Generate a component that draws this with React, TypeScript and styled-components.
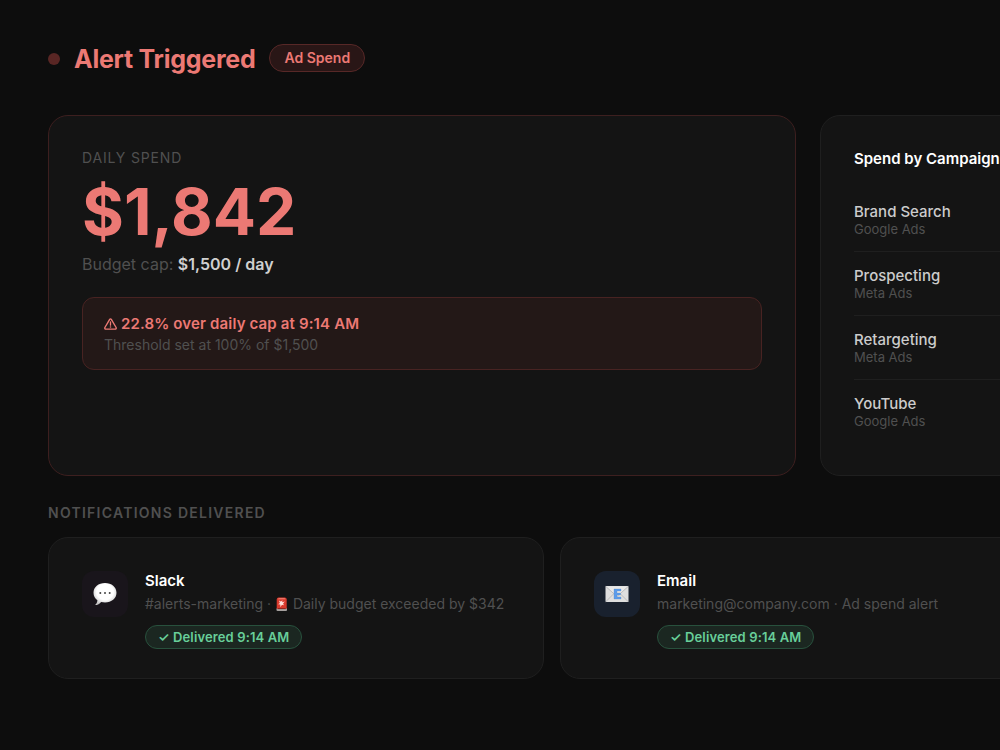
import React from "react";
import styled, { createGlobalStyle } from "styled-components";

const GlobalStyle = createGlobalStyle`
  *, *::before, *::after { box-sizing: border-box; }
  body {
    margin: 0;
    background: #0d0d0d;
    color: #fff;
    font-family: Inter, "Liberation Sans", sans-serif;
    overflow: hidden;
    -webkit-font-smoothing: antialiased;
  }
  h1, h2, h3, p, ul { margin: 0; padding: 0; }
`;

const Page = styled.main`
  min-width: 1616px;
  min-height: 100vh;
  padding: 43px 48px;
`;

const Header = styled.header`
  display: flex;
  align-items: center;
  gap: 14px;
  margin-bottom: 40px;
`;

const StatusDot = styled.span`
  width: 12px;
  height: 12px;
  border-radius: 50%;
  background: #592624;
`;

const Title = styled.h1`
  font-size: 25px;
  line-height: 32px;
  font-weight: 700;
  letter-spacing: -0.01em;
  color: #ec7974;
`;

const Tag = styled.span`
  margin-bottom: 2px;
  padding: 4px 14px;
  border: 1px solid #572827;
  border-radius: 20px;
  background: #291616;
  color: #ec7974;
  font-size: 14px;
  line-height: 18px;
  font-weight: 600;
`;

const Overview = styled.div`
  display: grid;
  grid-template-columns: 1fr 1fr;
  gap: 24px;
  margin-bottom: 28px;
`;

const Card = styled.section<{ $alert?: boolean }>`
  padding: 33px;
  border: 1px solid ${(p) => (p.$alert ? "#3d1f1f" : "#1f1f1f")};
  border-radius: 20px;
  background: #141414;
`;

const MetricLabel = styled.h2`
  font-size: 14px;
  line-height: 18px;
  font-weight: 400;
  letter-spacing: 0.06em;
  text-transform: uppercase;
  color: #505050;
`;

const MetricValue = styled.p`
  margin: 13px 0 9px;
  font-size: 64px;
  line-height: 64px;
  font-weight: 700;
  color: #ec7974;
`;

const MetricNote = styled.p`
  font-size: 16px;
  line-height: 22px;
  color: #505050;

  strong {
    font-weight: 600;
    color: #d0d0d0;
  }
`;

const AlertBox = styled.div`
  margin-top: 22px;
  padding: 16px 21px;
  border: 1px solid #482322;
  border-radius: 12px;
  background: #231817;
`;

const AlertTitle = styled.p`
  margin-bottom: 3px;
  font-size: 15px;
  line-height: 19px;
  font-weight: 600;
  letter-spacing: 0.01em;
  color: #ec7974;

  svg { vertical-align: -1px; }
`;

const AlertText = styled.p`
  font-size: 14px;
  line-height: 17px;
  color: #505050;
`;

const CardTitle = styled.h2`
  margin-bottom: 20px;
  font-size: 15px;
  line-height: 19px;
  font-weight: 600;
`;

const CampaignList = styled.ul`
  list-style: none;
`;

const Campaign = styled.li`
  padding: 15px 0 13px;
  border-bottom: 1px solid #1f1f1f;

  &:last-child {
    padding-bottom: 12px;
    border-bottom: 0;
  }
`;

const CampaignName = styled.p`
  font-size: 15px;
  line-height: 18px;
  font-weight: 500;
  color: #ccc;
`;

const CampaignSource = styled.p`
  font-size: 13px;
  line-height: 17px;
  color: #505050;
`;

const SectionTitle = styled.h2`
  margin-bottom: 15px;
  font-size: 14px;
  line-height: 18px;
  font-weight: 600;
  letter-spacing: 0.09em;
  text-transform: uppercase;
  color: #505050;
`;

const Channels = styled.div`
  display: grid;
  grid-template-columns: repeat(3, 1fr);
  gap: 16px;
`;

const ChannelCard = styled(Card)`
  display: flex;
  align-items: flex-start;
  gap: 17px;
  padding-top: 32px;
  padding-bottom: 29px;
`;

const ChannelIcon = styled.div<{ $tint: string }>`
  display: grid;
  place-items: center;
  width: 46px;
  height: 46px;
  margin-top: 1px;
  border-radius: 12px;
  background: ${(p) => p.$tint};
`;

const ChannelName = styled.h3`
  font-size: 15px;
  line-height: 22px;
  font-weight: 600;
`;

const ChannelText = styled.p`
  margin: 1px 0 11px;
  font-size: 14px;
  line-height: 21px;
  color: #505050;

  svg { vertical-align: -2px; }
`;

const Delivered = styled.span`
  display: block;
  width: fit-content;
  padding: 3px 12px;
  border: 1px solid #28513d;
  border-radius: 20px;
  background: #1b2721;
  color: #68cf9a;
  font-size: 13px;
  line-height: 16px;
  font-weight: 600;
  letter-spacing: 0.01em;
`;

const WarningIcon = () => (
  <svg width="13" height="12" viewBox="0 0 13 12" fill="none" role="img" aria-label="⚠">
    <path
      d="M5.700 1.300.9 9.500c-.4.800.1 1.600.9 1.600h9.400c.8 0 1.300-.8.9-1.600L7.300 1.300c-.4-.6-1.200-.6-1.600 0Z"
      stroke="currentColor"
      strokeWidth="1.400"
      strokeLinejoin="round"
    />
    <path d="M6.500 3.900v3.300" stroke="currentColor" strokeWidth="1.300" strokeLinecap="round" />
    <circle cx="6.500" cy="9" r="0.800" fill="currentColor" />
  </svg>
);

const SpeechIcon = () => (
  <svg width="24" height="24" viewBox="0 0 24 24" aria-hidden="true">
    <defs>
      <radialGradient id="bubble" cx="50%" cy="40%" r="60%">
        <stop offset="0.6" stopColor="#fff" />
        <stop offset="1" stopColor="#c4c4c4" />
      </radialGradient>
    </defs>
    <path
      d="M12 1C5.400 1 .5 5.100.5 10.700c0 3.400 1.400 5.700 3.900 7.500-.2 2-.9 3.600-2.300 4.900 2.500-.1 4.700-1.200 6-3.200 1.200.3 2.500.5 3.900.5 6.600 0 11.500-4.100 11.500-9.700S18.600 1 12 1Z"
      fill="url(#bubble)"
    />
    <circle cx="7.300" cy="11" r="1" fill="#444" />
    <circle cx="12" cy="11" r="1" fill="#444" />
    <circle cx="16.700" cy="11" r="1" fill="#444" />
  </svg>
);

const MailIcon = () => (
  <svg width="24" height="24" viewBox="0 0 24 24" aria-hidden="true">
    <rect x="0.5" y="4" width="23" height="16" rx="0.8" fill="#dedede" />
    <path d="M.8 19.700 9.500 11M23.200 19.700 14.500 11" stroke="#b2b2b2" strokeWidth="0.800" />
    <path d="M.8 4.500 12 14.500 23.200 4.500" fill="#e8e8e8" stroke="#b2b2b2" strokeWidth="0.800" />
    <path d="M9 7h7v2h-4v2h3.500v2H12v2h4v2H9Z" fill="#5b9bea" stroke="#5588c8" strokeWidth="0.300" />
  </svg>
);

const SirenIcon = () => (
  <svg width="14" height="14" viewBox="0 0 14 14" role="img" aria-label="🚨">
    <rect x="1.500" y="11" width="10.500" height="3" rx="1" fill="#a5a09e" />
    <path d="M1.700 11.800V2.500Q1.700.4 3.700.4h6q2 0 2 2.100v9.300Z" fill="#d93a2d" />
    <path d="M3 2.200Q3.200 1.200 4.200 1.200h5q1 0 1.200 1Z" fill="#f2897c" />
    <path d="m7.400 3.200-.2 2.100 2.600-.7-1.700 2 .8 1.600-2-.4-1.400 2.400-.2-2.600-2.200-.3 1.800-1.400-1-2.300 2 1Z" fill="#ffe2dc" />
    <path d="M2.700 11.600h8" stroke="#8d2119" />
  </svg>
);

const campaigns = [
  { name: "Brand Search", source: "Google Ads" },
  { name: "Prospecting", source: "Meta Ads" },
  { name: "Retargeting", source: "Meta Ads" },
  { name: "YouTube", source: "Google Ads" },
];

const channels = [
  {
    name: "Slack",
    tint: "#19151b",
    icon: <SpeechIcon />,
    text: (
      <>
        #alerts-marketing · <SirenIcon /> Daily budget exceeded by $342
      </>
    ),
  },
  {
    name: "Email",
    tint: "#19212e",
    icon: <MailIcon />,
    text: "marketing@company.com · Ad spend alert",
  },
];

export default function App() {
  return (
    <>
      <GlobalStyle />
      <Page>
        <Header>
          <StatusDot />
          <Title>Alert Triggered</Title>
          <Tag>Ad Spend</Tag>
        </Header>

        <Overview>
          <Card $alert>
            <MetricLabel>Daily Spend</MetricLabel>
            <MetricValue>$1,842</MetricValue>
            <MetricNote>
              Budget cap: <strong>$1,500 / day</strong>
            </MetricNote>
            <AlertBox role="alert">
              <AlertTitle>
                <WarningIcon /> 22.8% over daily cap at 9:14 AM
              </AlertTitle>
              <AlertText>Threshold set at 100% of $1,500</AlertText>
            </AlertBox>
          </Card>
          <Card>
            <CardTitle>Spend by Campaign</CardTitle>
            <CampaignList>
              {campaigns.map((c) => (
                <Campaign key={c.name}>
                  <CampaignName>{c.name}</CampaignName>
                  <CampaignSource>{c.source}</CampaignSource>
                </Campaign>
              ))}
            </CampaignList>
          </Card>
        </Overview>

        <SectionTitle>Notifications Delivered</SectionTitle>
        <Channels>
          {channels.map((c) => (
            <ChannelCard key={c.name}>
              <ChannelIcon $tint={c.tint}>{c.icon}</ChannelIcon>
              <div>
                <ChannelName>{c.name}</ChannelName>
                <ChannelText>{c.text}</ChannelText>
                <Delivered>✓ Delivered 9:14 AM</Delivered>
              </div>
            </ChannelCard>
          ))}
        </Channels>
      </Page>
    </>
  );
}
